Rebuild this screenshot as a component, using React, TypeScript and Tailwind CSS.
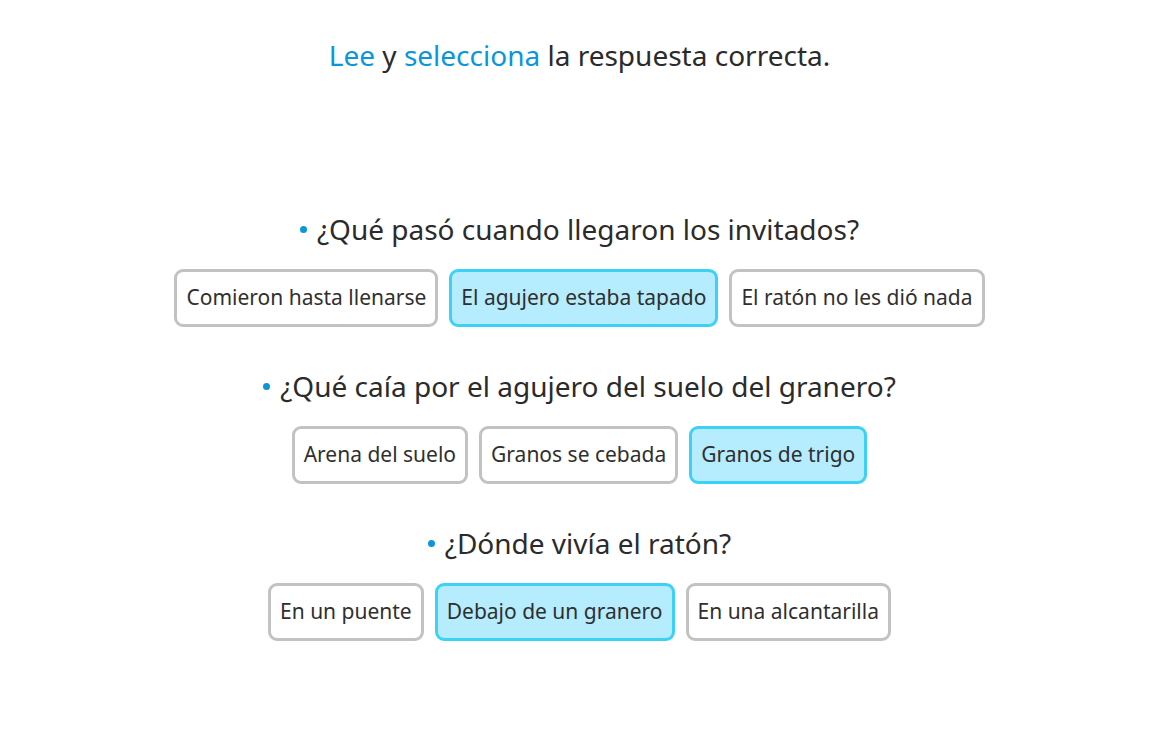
import { useState } from 'react';

type Question = {
  text: string;
  options: string[];
  selected: number;
};

const questions: Question[] = [
  {
    text: '¿Qué pasó cuando llegaron los invitados?',
    options: ['Comieron hasta llenarse', 'El agujero estaba tapado', 'El ratón no les dió nada'],
    selected: 1,
  },
  {
    text: '¿Qué caía por el agujero del suelo del granero?',
    options: ['Arena del suelo', 'Granos se cebada', 'Granos de trigo'],
    selected: 2,
  },
  {
    text: '¿Dónde vivía el ratón?',
    options: ['En un puente', 'Debajo de un granero', 'En una alcantarilla'],
    selected: 1,
  },
];

function QuestionBlock({ q }: { q: Question }) {
  const [selected, setSelected] = useState(q.selected);

  return (
    <div className="flex flex-col items-center">
      <div className="flex items-center gap-[10px] text-[28px] leading-[34px] text-[#2b2b2b]">
        <span className="w-[7px] h-[7px] rounded-full bg-[#0a96d8]" />
        <span>{q.text}</span>
      </div>
      <div className="mt-[23px] flex gap-[11px]">
        {q.options.map((opt, i) => (
          <button
            key={opt}
            type="button"
            onClick={() => setSelected(i)}
            className={
              i === selected
                ? 'h-[58px] px-[9px] rounded-[9px] border-[3px] border-[#3cd2f5] bg-[#b5ecfe] text-[21px] text-[#2f2f2f]'
                : 'h-[58px] px-[9px] rounded-[9px] border-[3px] border-[#c2c2c2] bg-white text-[21px] text-[#2f2f2f]'
            }
          >
            {opt}
          </button>
        ))}
      </div>
    </div>
  );
}

export default function App() {
  return (
    <div
      className="min-h-screen bg-white flex flex-col items-center pt-[38px]"
      style={{ fontFamily: '"Noto Sans", "Open Sans", sans-serif' }}
    >
      <h1 className="text-[28px] leading-[34px] text-[#2b2b2b] font-normal">
        <span className="text-[#0a96d8]">Lee</span> y{' '}
        <span className="text-[#0a96d8]">selecciona</span> la respuesta correcta.
      </h1>
      <div className="mt-[140px] flex flex-col gap-[42px]">
        {questions.map((q) => (
          <QuestionBlock key={q.text} q={q} />
        ))}
      </div>
    </div>
  );
}
